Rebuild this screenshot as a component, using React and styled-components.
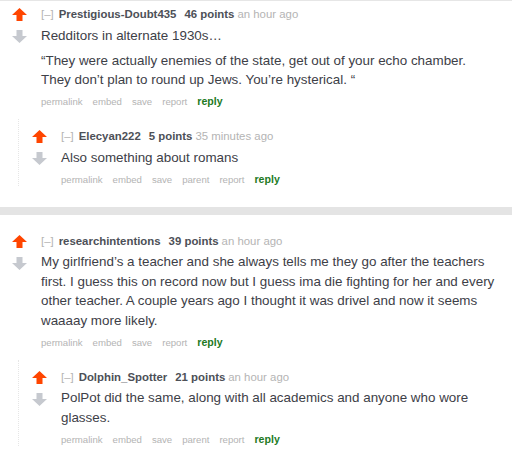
import React from "react";
import styled, { createGlobalStyle } from "styled-components";

const Global = createGlobalStyle`
  body {
    margin: 0;
    background: #fff;
    font-family: "Liberation Sans", Arial, Helvetica, sans-serif;
  }
`;

const threads = [
  {
    author: "Prestigious-Doubt435",
    points: "46 points",
    time: "an hour ago",
    body: [
      "Redditors in alternate 1930s…",
      "“They were actually enemies of the state, get out of your echo chamber. They don’t plan to round up Jews. You’re hysterical. “",
    ],
    child: {
      author: "Elecyan222",
      points: "5 points",
      time: "35 minutes ago",
      body: ["Also something about romans"],
    },
  },
  {
    author: "researchintentions",
    points: "39 points",
    time: "an hour ago",
    body: [
      "My girlfriend’s a teacher and she always tells me they go after the teachers first. I guess this on record now but I guess ima die fighting for her and every other teacher. A couple years ago I thought it was drivel and now it seems waaaay more likely.",
    ],
    child: {
      author: "Dolphin_Spotter",
      points: "21 points",
      time: "an hour ago",
      body: [
        "PolPot did the same, along with all academics and anyone who wore glasses.",
      ],
    },
  },
];

function UpArrow() {
  return (
    <svg width="15" height="13" viewBox="0 0 15 13">
      <path d="M7.5 0 L15 7 L10.5 7 L10.5 13 L4.5 13 L4.5 7 L0 7 Z" fill="#ff4500" />
    </svg>
  );
}

function DownArrow() {
  return (
    <svg width="15" height="13" viewBox="0 0 15 13">
      <path d="M4.5 0 L10.5 0 L10.5 6 L15 6 L7.5 13 L0 6 L4.5 6 Z" fill="#c6c9cf" />
    </svg>
  );
}

function Comment({ c, isChild }) {
  return (
    <Row>
      <Votes>
        <UpArrow />
        <DownArrow />
      </Votes>
      <Entry>
        <Tagline>
          <Collapse>[–]</Collapse>
          <Author>{c.author}</Author>
          <Score>{c.points}</Score>
          <Time>{c.time}</Time>
        </Tagline>
        <Body>
          {c.body.map((p, i) => (
            <p key={i}>{p}</p>
          ))}
        </Body>
        <Buttons>
          <li>permalink</li>
          <li>embed</li>
          <li>save</li>
          {isChild && <li>parent</li>}
          <li>report</li>
          <Reply>reply</Reply>
        </Buttons>
      </Entry>
    </Row>
  );
}

export default function App() {
  return (
    <Page>
      <Global />
      {threads.map((t, i) => (
        <Thread key={i}>
          <Comment c={t} />
          <Child>
            <Comment c={t.child} isChild />
          </Child>
        </Thread>
      ))}
    </Page>
  );
}

const Page = styled.div`
  width: 512px;
  height: 450px;
  overflow: hidden;
  border-top: 1px solid #e6e6e6;
`;

const Thread = styled.div`
  padding: 6px 0 21px;
  & + & {
    border-top: 8px solid #e4e4e4;
    padding-top: 19px;
  }
`;

const Row = styled.div`
  display: flex;
  align-items: flex-start;
`;

const Votes = styled.div`
  width: 41px;
  padding: 1px 0 0 12px;
  box-sizing: border-box;
  display: flex;
  flex-direction: column;
  gap: 9px;
  flex-shrink: 0;
  svg {
    display: block;
  }
`;

const Entry = styled.div`
  flex: 1;
  padding-right: 14px;
`;

const Tagline = styled.div`
  font-size: 11.4px;
  line-height: 14px;
  color: #4d5057;
  display: flex;
  align-items: baseline;
  white-space: nowrap;
`;

const Collapse = styled.span`
  color: #b4b4b4;
  margin-right: 5px;
`;

const Author = styled.span`
  font-weight: bold;
  margin-right: 8px;
`;

const Score = styled.span`
  font-weight: bold;
  margin-right: 3px;
`;

const Time = styled.span`
  color: #b4b4b4;
`;

const Body = styled.div`
  font-size: 13.4px;
  line-height: 19.5px;
  color: #3d4047;
  margin-top: 4.5px;
  p {
    margin: 0 0 5.5px;
  }
`;

const Buttons = styled.ul`
  list-style: none;
  margin: 1px 0 0;
  padding: 0;
  display: flex;
  align-items: baseline;
  gap: 10px;
  font-size: 9.6px;
  line-height: 12px;
  color: #b4b4b4;
`;

const Reply = styled.li`
  color: #227a1f;
  font-weight: bold;
  font-size: 10.6px;
`;

const Child = styled.div`
  margin: 11px 0 0 18px;
  padding: 10px 0 0 1px;
  border-left: 1px dotted #e6e6e6;
`;
